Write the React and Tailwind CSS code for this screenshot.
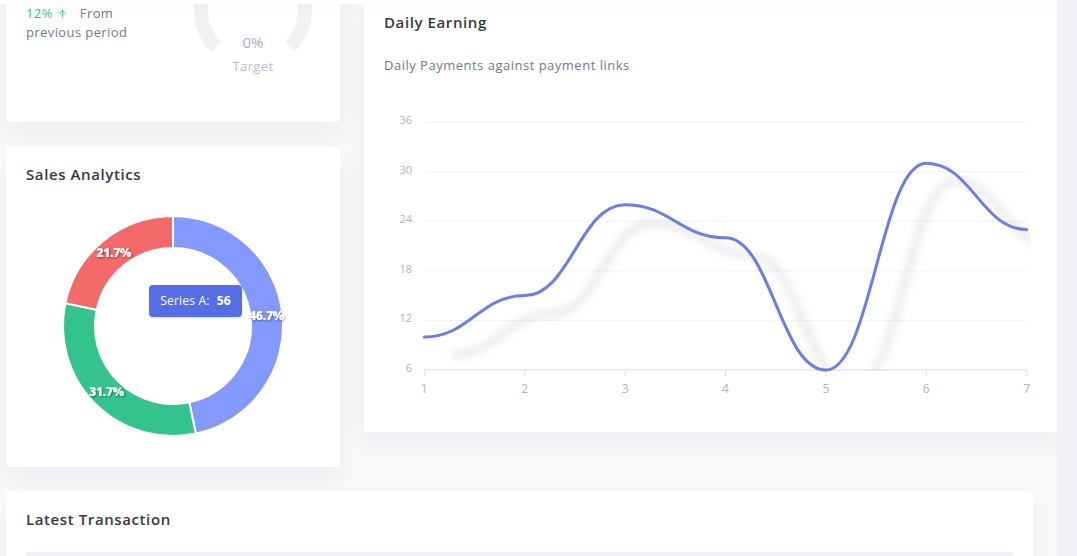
import React from 'react';
import { ArrowUp } from 'lucide-react';

const font = { fontFamily: '"Open Sans", "Liberation Sans", sans-serif' };

// donut helpers
const polar = (cx, cy, r, deg) => {
  const a = ((deg - 90) * Math.PI) / 180;
  return [cx + r * Math.cos(a), cy + r * Math.sin(a)];
};

const ringPath = (cx, cy, rOut, rIn, start, end) => {
  const [x1, y1] = polar(cx, cy, rOut, start);
  const [x2, y2] = polar(cx, cy, rOut, end);
  const [x3, y3] = polar(cx, cy, rIn, end);
  const [x4, y4] = polar(cx, cy, rIn, start);
  const large = end - start > 180 ? 1 : 0;
  return `M${x1} ${y1} A${rOut} ${rOut} 0 ${large} 1 ${x2} ${y2} L${x3} ${y3} A${rIn} ${rIn} 0 ${large} 0 ${x4} ${y4} Z`;
};

const slices = [
  { value: 56, color: '#8399fd', label: '46.7%' },
  { value: 38, color: '#34c38f', label: '31.7%' },
  { value: 26, color: '#f46a6a', label: '21.7%' },
];

const SalesDonut = () => {
  const total = slices.reduce((s, x) => s + x.value, 0);
  let acc = 0;
  return (
    <div className="relative w-[240px] h-[240px] mx-auto mt-5">
      <svg width="240" height="240" viewBox="0 0 240 240">
        <defs>
          <filter id="lblShadow" x="-20%" y="-40%" width="140%" height="180%">
            <feDropShadow dx="1" dy="1" stdDeviation="1" floodColor="#000" floodOpacity="0.45" />
          </filter>
        </defs>
        {slices.map((s) => {
          const start = (acc / total) * 360;
          acc += s.value;
          const end = (acc / total) * 360;
          return (
            <path key={s.label} d={ringPath(120, 120, 110, 78, start, end)} fill={s.color} stroke="#fff" strokeWidth="2" />
          );
        })}
        {(() => {
          let a = 0;
          return slices.map((s) => {
            const mid = ((a + s.value / 2) / total) * 360;
            a += s.value;
            const [x, y] = polar(120, 120, 94, mid);
            return (
              <text key={s.label} x={x} y={y + 4} textAnchor="middle" fill="#fff" fontSize="12" fontWeight="800" letterSpacing="-0.3" filter="url(#lblShadow)" style={font}>
                {s.label}
              </text>
            );
          });
        })()}
      </svg>
      <div className="absolute left-[96px] top-[79px] w-[93px] h-[32px] rounded bg-[#556ee6] shadow-sm flex items-center justify-center gap-[7px] text-white text-[12px] tracking-[0.2px]" style={font}>
        <span>Series A:</span>
        <span className="font-bold">56</span>
      </div>
    </div>
  );
};

const data = [10, 15, 26, 22, 6, 31, 23];

const EarningChart = () => {
  // svg origin = (384, 75) on page
  const x0 = 40.3;
  const step = 100.4;
  const yOf = (v) => 295 - (v - 6) * (248 / 30);
  const pts = data.map((v, i) => [x0 + i * step, yOf(v)]);
  let d = `M${pts[0][0]} ${pts[0][1]}`;
  for (let i = 1; i < pts.length; i++) {
    const [ax, ay] = pts[i - 1];
    const [bx, by] = pts[i];
    const c = (bx - ax) * 0.45;
    d += ` C${ax + c} ${ay} ${bx - c} ${by} ${bx} ${by}`;
  }
  const ticks = [36, 30, 24, 18, 12, 6];
  return (
    <svg width="653" height="330" viewBox="0 0 653 330" className="block">
      <defs>
        <filter id="lineBlur" x="-10%" y="-20%" width="120%" height="140%">
          <feGaussianBlur stdDeviation="4" />
        </filter>
        <clipPath id="plot">
          <rect x={x0} y="0" width={step * 6 + 4} height="296" />
        </clipPath>
      </defs>
      {ticks.map((t) => (
        <g key={t}>
          <line x1={x0} x2={x0 + step * 6} y1={yOf(t)} y2={yOf(t)} stroke="#f3f3f3" strokeWidth="1" />
          <text x="28" y={yOf(t) + 2} textAnchor="end" fontSize="11" fill="#adb5bd" style={font}>
            {t}
          </text>
        </g>
      ))}
      <g clipPath="url(#plot)">
        <path d={d} transform="translate(28 18)" fill="none" stroke="#000" strokeOpacity="0.1" strokeWidth="6" filter="url(#lineBlur)" />
      </g>
      <line x1={x0} x2={x0 + step * 6} y1="295" y2="295" stroke="#e0e0e0" />
      {data.map((_, i) => (
        <g key={i}>
          <line x1={x0 + i * step} x2={x0 + i * step} y1="295" y2="301" stroke="#e0e0e0" />
          <text x={x0 + i * step} y="318" textAnchor="middle" fontSize="12" fill="#adb5bd" style={font}>
            {i + 1}
          </text>
        </g>
      ))}
      <path d={d} fill="none" stroke="#6a7ee8" strokeWidth="3" strokeLinecap="round" />
    </svg>
  );
};

const Gauge = () => (
  <svg width="140" height="160" viewBox="0 0 140 160" className="block shrink-0">
    <path
      d={(() => {
        const [sx, sy] = polar(70, 70, 52, -135);
        const [ex, ey] = polar(70, 70, 52, 135);
        return `M${sx} ${sy} A52 52 0 1 1 ${ex} ${ey}`;
      })()}
      fill="none"
      stroke="#f2f2f2"
      strokeWidth="14"
    />
    <text x="70" y="108" textAnchor="middle" fontSize="15" fill="#a6b0cf" style={font}>0%</text>
    <text x="70" y="131" textAnchor="middle" fontSize="13" fill="#b4bcd3" letterSpacing="0.4" style={font}>Target</text>
  </svg>
);

const card = 'bg-white rounded shadow-[0_12px_24px_rgba(18,38,63,0.04)]';
const title = 'text-[15px] leading-6 font-semibold text-[#343a40] tracking-[0.6px]';

export default function App() {
  return (
    <div className="relative w-[1077px] h-[556px] overflow-hidden bg-[#f8f8fb] flex" style={font}>
      <div className="w-[1057px] shrink-0">
        <div className="flex gap-6 pl-[6px] -mt-[60px]">
          <div className="w-[334px] flex flex-col gap-6 shrink-0">
            <div className={`${card} h-[182px] flex pl-5`}>
              <div className="w-[157px] pt-[64px] text-[13px] leading-[19px] text-[#74788d] tracking-[0.4px]">
                <span className="text-[#34c38f] inline-flex items-center gap-1">
                  12% <ArrowUp size={11} strokeWidth={2} />
                </span>
                <span className="ml-3">From</span>
                <br />
                previous period
              </div>
              <Gauge />
            </div>
            <div className={`${card} h-[321px] px-5 pt-[16px]`}>
              <h4 className={title}>Sales Analytics</h4>
              <SalesDonut />
            </div>
          </div>
          <div className={`${card} w-[693px] h-[436px] mt-[56px] px-5 pt-[14px]`}>
            <h4 className={title}>Daily Earning</h4>
            <p className="mt-[21px] text-[13px] leading-5 text-[#74788d] tracking-[0.5px]">Daily Payments against payment links</p>
            <EarningChart />
          </div>
        </div>
        <div className={`${card} ml-[6px] w-[1027px] h-[200px] mt-6 pt-4 px-5`}>
          <h4 className={title}>Latest Transaction</h4>
          <div className="mt-[21px] h-[40px] bg-[#eff2f7]" />
        </div>
      </div>
      <div className="w-[20px] bg-[#f2f2f6]" />
      <div className="absolute top-0 left-0 w-[1057px] h-[4px] bg-white shadow-[0_4px_14px_rgba(18,38,63,0.05)]" />
    </div>
  );
}
